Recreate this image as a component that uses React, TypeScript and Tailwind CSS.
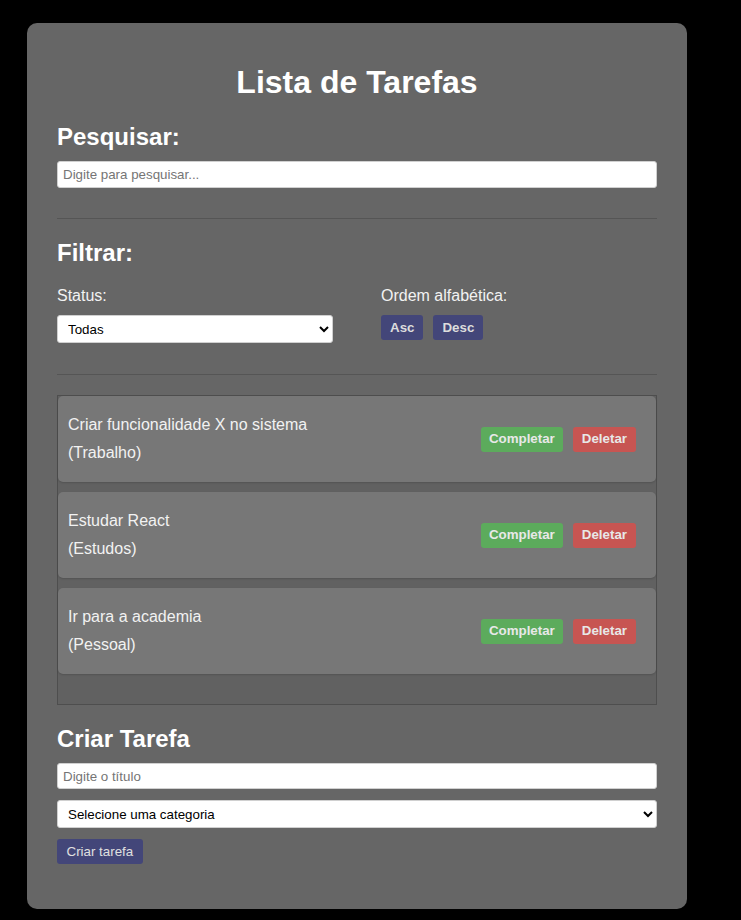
import React from "react";

const tasks = [
  { title: "Criar funcionalidade X no sistema", category: "Trabalho" },
  { title: "Estudar React", category: "Estudos" },
  { title: "Ir para a academia", category: "Pessoal" },
];

function TaskItem({ title, category }: { title: string; category: string }) {
  return (
    <div className="mb-[10px] flex h-[86px] items-center justify-between rounded-[5px] bg-[#777777] pl-[10px] pr-[20px] shadow-[0_1px_2px_rgba(0,0,0,0.15)]">
      <div className="text-[16px] leading-[28px] text-[#f2f2f2]">
        <p>{title}</p>
        <p>({category})</p>
      </div>
      <div className="flex gap-[10px]">
        <button className="h-[25px] rounded-[3px] bg-[#5cab5c] px-[8px] text-[13.33px] font-bold text-[#e8e8e8]">
          Completar
        </button>
        <button className="h-[25px] rounded-[3px] bg-[#c75552] px-[9px] text-[13.33px] font-bold text-[#e8e8e8]">
          Deletar
        </button>
      </div>
    </div>
  );
}

export default function App() {
  return (
    <div className="min-h-[920px] bg-black pl-[27px] pt-[23px] pb-[12px] font-['Liberation_Sans',Arial,sans-serif]">
      <div className="w-[660px] rounded-[10px] bg-[#666666] px-[30px] pt-[20px] pb-[45px] text-white">
        <h1 className="mt-[21px] text-center text-[32px] font-bold leading-[37px]">Lista de Tarefas</h1>

        {/* Pesquisa */}
        <h2 className="mt-[22px] text-[24px] font-bold leading-[28px]">Pesquisar:</h2>
        <input
          className="mt-[10px] block h-[27px] w-full rounded-[3px] border border-[#d0d0d0] bg-white px-[5px] text-[13.33px] text-black placeholder:text-[#757575] outline-none"
          placeholder="Digite para pesquisar..."
        />
        <hr className="mt-[30px] border-0 border-t border-[#555555]" />

        {/* Filtros */}
        <h2 className="mt-[20px] text-[24px] font-bold leading-[28px]">Filtrar:</h2>
        <div className="mt-[20px] grid grid-cols-2 gap-[48px]">
          <div>
            <p className="text-[16px] leading-[18px] text-[#f2f2f2]">Status:</p>
            <select className="mt-[10px] block h-[28px] w-full rounded-[3px] border border-[#d0d0d0] bg-white px-[6px] text-[13.33px] text-black">
              <option>Todas</option>
              <option>Completas</option>
              <option>Incompletas</option>
            </select>
          </div>
          <div>
            <p className="text-[16px] leading-[18px] text-[#f2f2f2]">Ordem alfabética:</p>
            <div className="mt-[10px] flex gap-[10px]">
              <button className="h-[25px] rounded-[3px] bg-[#434679] px-[9px] text-[13.33px] font-bold text-[#dcdcdc]">
                Asc
              </button>
              <button className="h-[25px] rounded-[3px] bg-[#434679] px-[9px] text-[13.33px] font-bold text-[#dcdcdc]">
                Desc
              </button>
            </div>
          </div>
        </div>
        <hr className="mt-[31px] border-0 border-t border-[#555555]" />

        {/* Lista */}
        <div className="mt-[20px] h-[310px] border border-[#4e4e4e] bg-[#616161] pb-[20px]">
          {tasks.map((t) => (
            <TaskItem key={t.title} title={t.title} category={t.category} />
          ))}
        </div>

        {/* Criar */}
        <h2 className="mt-[20px] text-[24px] font-bold leading-[28px]">Criar Tarefa</h2>
        <input
          className="mt-[10px] block h-[26px] w-full rounded-[3px] border border-[#d0d0d0] bg-white px-[5px] text-[13.33px] text-black placeholder:text-[#757575] outline-none"
          placeholder="Digite o título"
        />
        <select className="mt-[11px] block h-[28px] w-full rounded-[3px] border border-[#d0d0d0] bg-white px-[6px] text-[13.33px] text-black">
          <option>Selecione uma categoria</option>
          <option>Trabalho</option>
          <option>Pessoal</option>
          <option>Estudos</option>
        </select>
        <button className="mt-[11px] block h-[25px] rounded-[3px] bg-[#434679] px-[9.5px] text-[13.33px] text-[#e0e0e0]">
          Criar tarefa
        </button>
      </div>
    </div>
  );
}
